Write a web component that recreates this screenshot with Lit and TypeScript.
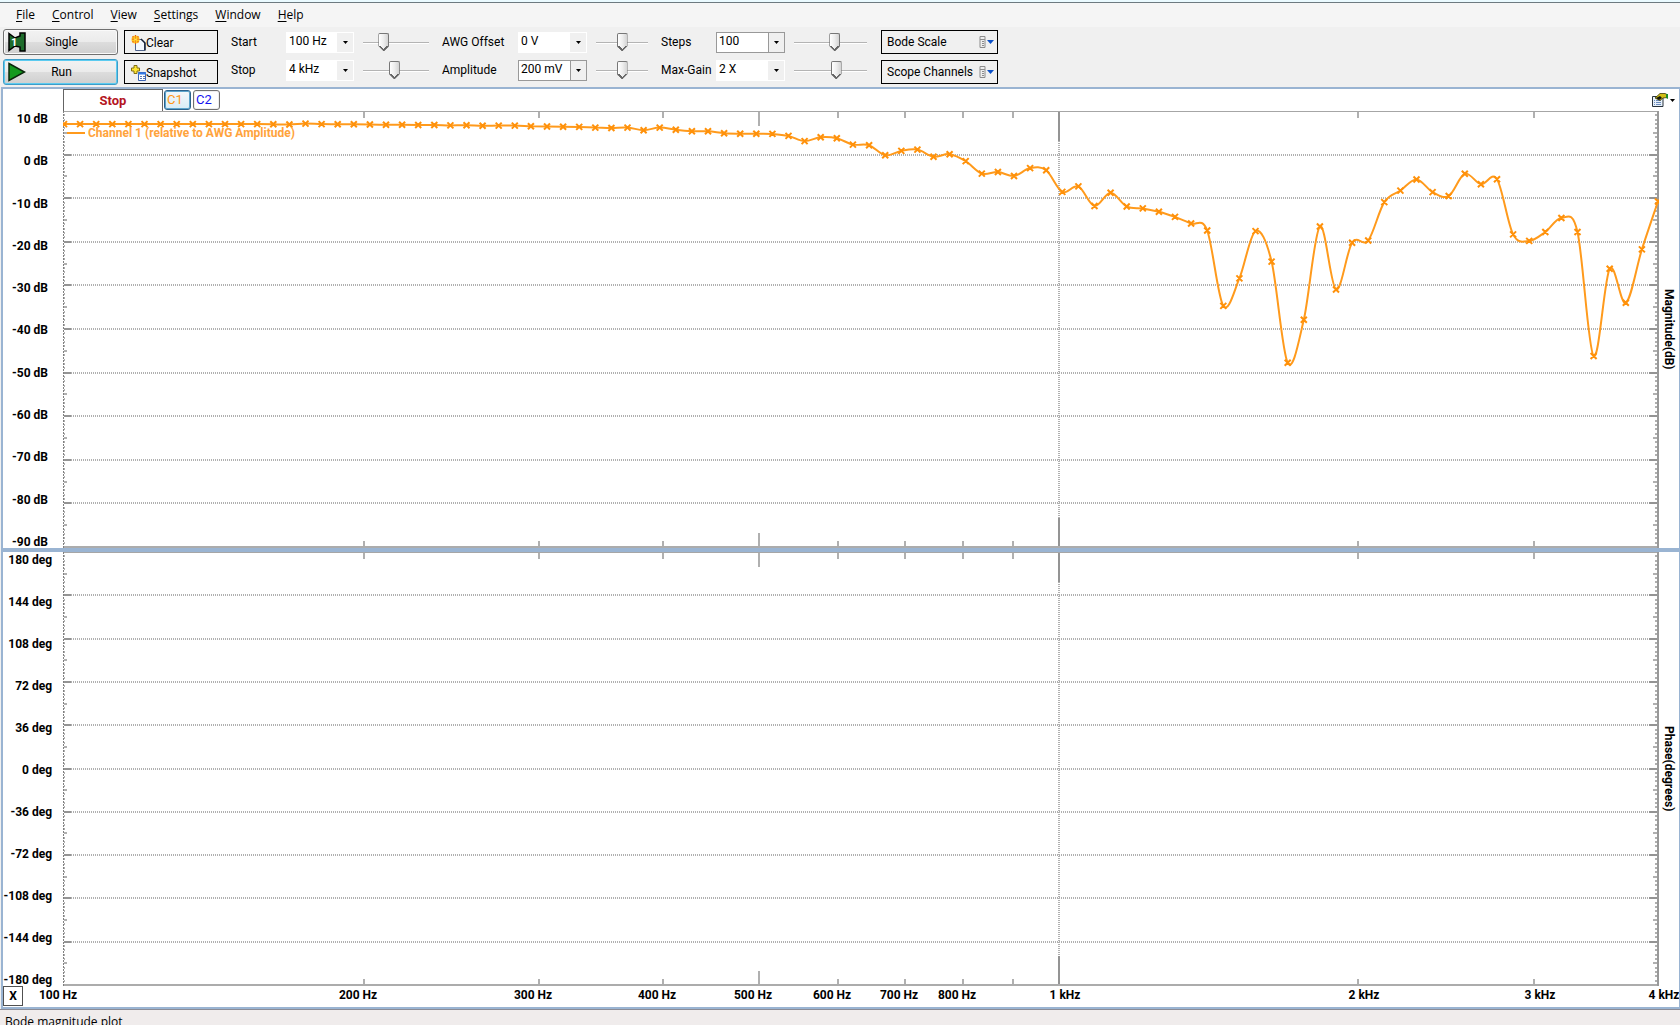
import { LitElement, html, svg, css, nothing } from "lit";
import { customElement, property, state } from "lit/decorators.js";
import { classMap } from "lit/directives/class-map.js";

const F_START = 100;
const F_STOP = 4000;

const CHANNEL_1 = [
  7, 7, 7, 7, 7, 7, 7, 7, 7, 7, 7, 7, 7, 6.95, 6.9, 7.1, 7, 6.95, 6.95, 6.9,
  6.85, 6.85, 6.8, 6.8, 6.7, 6.75, 6.6, 6.65, 6.65, 6.5, 6.45, 6.4, 6.35, 6.2,
  6.1, 6.2, 5.6, 6.2, 5.7, 5.35, 5.35, 4.9, 4.8, 4.8, 4.75, 4.3, 3.1, 4.0,
  3.75, 2.3, 2.15, -0.15, 0.85, 1.15, -0.5, 0.1, -1.5, -4.35, -4.0, -4.9,
  -3.1, -3.6, -8.55, -7.3, -11.8, -8.75, -11.9, -12.35, -13.1, -14.3, -15.8,
  -17.4, -34.7, -28.4, -17.55, -24.55, -47.75, -37.9, -16.5, -30.95, -20.2,
  -19.7, -10.9, -8.25, -5.7, -8.6, -9.5, -4.4, -6.8, -5.65, -18.3, -19.8,
  -17.75, -14.55, -17.75, -46.2, -26.2, -34.0, -21.75, -10.75,
];

/** Share of the axis width at which a frequency lies, on the log scale. */
const freqShare = (f: number) => Math.log(f / F_START) / Math.log(F_STOP / F_START);

/** Lit element that keeps track of its own content size. */
class SizedElement extends LitElement {
  @state() protected w = 0;
  @state() protected h = 0;
  private observer?: ResizeObserver;

  connectedCallback() {
    super.connectedCallback();
    this.observer = new ResizeObserver(() => this.measure());
    this.observer.observe(this);
  }
  disconnectedCallback() {
    this.observer?.disconnect();
    super.disconnectedCallback();
  }
  firstUpdated() {
    this.measure();
  }
  private measure() {
    this.w = this.clientWidth;
    this.h = this.clientHeight;
  }
}

@customElement("bode-plot")
class BodePlot extends SizedElement {
  @property({ attribute: false }) values: number[] = [];
  @property() legend = "";
  @property({ type: Number }) max = 10;
  @property({ type: Number }) min = -90;

  static styles = css`
    :host { display: block; min-width: 0; min-height: 0; overflow: hidden; }
    svg { display: block; }
    .grid { stroke: #b0b0b0; stroke-width: 2; stroke-dasharray: 1 1; fill: none; }
    .top { fill: #a6a6a6; }
    .base { stroke: #acacac; stroke-width: 2; fill: none; }
    .edge { stroke: #999; stroke-width: 2; fill: none; }
    .edge-dots { stroke: #808080; stroke-width: 1; stroke-dasharray: 2 1; fill: none; }
    .tick { stroke: #b0b0b0; stroke-width: 2; fill: none; }
    .major { stroke: #949494; stroke-width: 2; fill: none; }
    .trace { stroke: #ff9a1c; stroke-width: 2; fill: none; stroke-linejoin: round; }
    .marks { stroke: #ff910a; stroke-width: 2; fill: none; }
    .legend { fill: #ffa33c; font: bold 12px Roboto, "Liberation Sans", sans-serif; }
  `;

  private x = (share: number) => 1 + share * (this.w - 2);
  private y = (v: number) => ((this.max - v) / (this.max - this.min)) * (this.h - 1);

  private ticks() {
    const bottom = this.h;
    let d = "";
    for (let f = 200; f < F_STOP; f += f < 1000 ? 100 : 1000) {
      if (f === 1000) continue;
      const len = f === 500 ? 15 : 7;
      const x = Math.round(this.x(freqShare(f)));
      d += `M${x} 0V${len}M${x} ${bottom}V${bottom - len}`;
    }
    return d;
  }

  private sideTicks() {
    let minor = "";
    let major = "";
    let rows = "";
    for (let i = 0; i <= 100; i++) {
      const y = Math.round((i / 100) * (this.h - 1));
      const len = i % 5 === 0 ? 4 : 2;
      if (i % 10 === 0) {
        major += `M1 ${y}h7M${this.w - 1} ${y}h-9`;
        if (i > 0 && i < 100) rows += `M8 ${y}H${this.w - 9}`;
      } else {
        minor += `M1 ${y}h${len - 1}M${this.w - 1} ${y}h${-len - 1}`;
      }
    }
    return { minor, major, rows };
  }

  private trace() {
    const n = this.values.length - 1;
    const pts = this.values.map((v, i) => [this.x(i / n), this.y(v)]);
    const r = (v: number) => v.toFixed(1);
    let line = `M${r(pts[0][0])} ${r(pts[0][1])}`;
    let marks = "";
    for (let i = 0; i < n; i++) {
      const a = pts[Math.max(i - 1, 0)];
      const b = pts[i];
      const c = pts[i + 1];
      const e = pts[Math.min(i + 2, n)];
      line += `C${r(b[0] + (c[0] - a[0]) / 6)} ${r(b[1] + (c[1] - a[1]) / 6)} ${r(c[0] - (e[0] - b[0]) / 6)} ${r(c[1] - (e[1] - b[1]) / 6)} ${r(c[0])} ${r(c[1])}`;
    }
    for (const [x, y] of pts) marks += `M${r(x - 3)} ${r(y - 3)}l6 6m0 -6l-6 6`;
    return svg`<path class="trace" d=${line}></path><path class="marks" d=${marks}></path>`;
  }

  render() {
    const { w, h } = this;
    if (!w || !h) return nothing;
    const side = this.sideTicks();
    const k = Math.round(this.x(freqShare(1000)));
    return html`<svg width=${w} height=${h}>
      <path class="grid" d=${side.rows}></path>
      <path class="grid" d=${`M${k} 0V${h}`}></path>
      <path class="tick" d=${side.minor + this.ticks()}></path>
      <path class="major" d=${side.major + `M${k} 0v30M${k} ${h}v-30`}></path>
      <rect class="top" width=${w} height="1"></rect>
      <path class="base" d=${`M0 ${h - 1}H${w}`}></path>
      <path class="edge-dots" d=${`M.5 0V${h}`}></path>
      <path class="edge" d=${`M${w - 1} 0V${h}`}></path>
      ${this.values.length ? this.trace() : nothing}
      ${this.legend
        ? svg`<path class="trace" d="M4 22h18"></path><text class="legend" x="25" y="26">${this.legend}</text>`
        : nothing}
    </svg>`;
  }
}

@customElement("frequency-axis")
class FrequencyAxis extends SizedElement {
  /** Distance from the element's edges to the ends of the plotted range. */
  @property({ type: Number }) left = 0;
  @property({ type: Number }) right = 0;

  static styles = css`
    :host { display: block; min-width: 0; overflow: hidden; }
    svg { display: block; }
    text { font: bold 12px Roboto, "Liberation Sans", sans-serif; text-anchor: middle; }
  `;

  render() {
    if (!this.w) return nothing;
    const list = [100, 200, 300, 400, 500, 600, 700, 800, 1000, 2000, 3000, 4000];
    const span = this.w - this.left - this.right;
    return html`<svg width=${this.w} height=${this.h}>
      ${list.map((f) => {
        const shift = f < 1000 ? -6 : 6;
        const label = f < 1000 ? `${f} Hz` : `${f / 1000} kHz`;
        return svg`<text x=${Math.round(this.left + span * freqShare(f)) + shift} y="13">${label}</text>`;
      })}
    </svg>`;
  }
}

@customElement("value-combo")
class ValueCombo extends LitElement {
  @property() label = "";
  @property() value = "";
  @property({ type: Boolean }) framed = false;
  @property({ type: Number }) level = 50;

  static styles = css`
    :host { display: contents; }
    label { font-size: 12px; line-height: 22px; white-space: nowrap; }
    .combo { display: grid; grid-template-columns: 1fr 16px; height: 21px; box-sizing: border-box; border: 1px solid #fff; background: #fff; }
    .framed { border-color: #999; }
    select { grid-area: 1 / 1 / 2 / 3; appearance: none; border: 0; margin: 0; padding: 0 0 2px 2px; background: none; font: inherit; font-size: 12px; color: #000; min-width: 0; border-radius: 0; }
    .arrow { grid-area: 1 / 2; background: #f0f0f0; display: grid; place-items: center; pointer-events: none; }
    .framed .arrow { border-left: 1px solid #999; }
    input { appearance: none; margin: 0 0 0 9px; width: calc(100% - 9px); height: 21px; background: linear-gradient(#b4b4b4, #b4b4b4) 0 10px / 100% 1px no-repeat, linear-gradient(#fff, #fff) 0 11px / 100% 1px no-repeat; }
    input::-webkit-slider-thumb {
      appearance: none; box-sizing: border-box; width: 11px; height: 18px; border: 1px solid #777; border-bottom: 0; border-radius: 2px 2px 0 0;
      background:
        linear-gradient(to top right, transparent 38%, #666 38% 64%, transparent 64%) 0 100% / 5px 5px no-repeat,
        linear-gradient(to top left, transparent 38%, #666 38% 64%, transparent 64%) 100% 100% / 5px 5px no-repeat,
        linear-gradient(90deg, #fff, #eee 50%, #d4d4d4);
      clip-path: polygon(0 0, 100% 0, 100% 13px, 6px 100%, 5px 100%, 0 13px);
    }
  `;

  render() {
    return html`<label for="value">${this.label}</label>
      <span class=${classMap({ combo: true, framed: this.framed })}>
        <select id="value"><option>${this.value}</option></select>
        <span class="arrow"><svg width="5" height="3"><path d="M0 0h5L2.5 3z"></path></svg></span>
      </span>
      <input type="range" aria-label=${this.label} min="0" max="100" .value=${String(this.level)} />`;
  }
}

@customElement("app-root")
class AppRoot extends LitElement {
  static styles = css`
    :host { display: grid; grid-template-rows: auto auto auto minmax(0, 1fr) 16px; height: 100vh; overflow: hidden; background: #f0f0f0; color: #000; font: 12px/16px Roboto, "Liberation Sans", sans-serif; }
    button { font: inherit; color: inherit; margin: 0; padding: 0; box-sizing: border-box; }
    svg { display: block; flex: none; }

    .titlebar { height: 2px; background: #eafaff; border-bottom: 1px solid #6d7a80; }
    .menu { display: flex; height: 24px; background: #f5f5f5; padding-left: 7px; align-items: center; font-family: "Open Sans", "Noto Sans", sans-serif; }
    .menu a { color: inherit; text-decoration: none; padding: 0 8px 0 9px; }
    .menu u { text-underline-offset: 2px; }

    .toolbar { display: flex; height: 60px; align-items: center; padding-left: 3px; }
    .stack { display: grid; gap: 4px; width: 115px; }
    .stack.tools { gap: 6px; width: 94px; margin-left: 6px; }
    .stack.menus { gap: 6px; width: 117px; margin-left: 14px; }
    .run { display: grid; grid-template-columns: 24px 1fr; align-items: center; height: 26px; padding: 0 26px 0 4px; border: 1px solid #707070; border-radius: 3px; background: linear-gradient(#f2f2f2, #ebebeb 50%, #dddddd 50%, #cfcfcf); box-shadow: inset 0 0 0 1px #fafafa; }
    .run.active { border-color: #3c9cc8; box-shadow: inset 0 0 0 1px #5ccbf0; }
    .boxed { display: flex; align-items: center; height: 24px; border: 1px solid #000; background: #f0f0f0; padding: 2px 0 0 6px; text-align: left; }
    .menus .boxed { justify-content: space-between; padding: 0 3px 0 5px; }
    .fields { display: grid; align-items: center; row-gap: 6px; padding-bottom: 2px; }
    .f1 { grid-template-columns: 55px 68px 75px; margin-left: 13px; }
    .f2 { grid-template-columns: 76px 69px 61px; margin-left: 13px; }
    .f3 { grid-template-columns: 55px 69px 82px; margin-left: 13px; }

    .chart { display: grid; grid-template-rows: 22px minmax(0, 437fr) 4px minmax(0, 434fr) 21px; border: 2px solid #9ab4d2; border-right-width: 1px; margin-left: 1px; background: #fff; min-height: 0; }
    .bar { display: flex; padding: 0 4px 0 60px; }
    .stop { width: 100px; box-sizing: border-box; border: 1px solid #646464; border-bottom: 0; color: #b4141e; font-size: 13px; font-weight: bold; text-align: center; line-height: 22px; }
    .chan { width: 27px; height: 20px; margin: 1px 0 0 1px; border: 1px solid #707070; border-radius: 3px; background: #fff; font-size: 13px; color: #1414f0; padding-right: 5px; box-shadow: inset 0 0 0 1px #eee; }
    .chan + .chan { margin-left: 2px; }
    .chan.on { color: #ff9614; border-color: #2c628b; background: linear-gradient(#f4f8fa, #d8ecf6); box-shadow: inset 0 0 0 1px #5ca4cc; }
    .options { display: flex; align-items: center; gap: 2px; margin-left: auto; border: 0; background: none; }
    .panel { display: grid; grid-template-columns: 60px minmax(0, 1fr) 20px; min-height: 0; }
    .splitter { background: #9ab4d2; }
    .scale { display: flex; flex-direction: column; justify-content: space-between; align-items: flex-end; padding: 1px 15px 0 0; margin-bottom: -1px; line-height: 14px; font-weight: bold; white-space: nowrap; min-height: 0; }
    .scale.phase { padding-right: 11px; }
    .title { writing-mode: vertical-rl; text-align: center; font-weight: bold; line-height: 20px; }
    .axis { display: grid; grid-template-columns: 20px minmax(0, 1fr); }
    .close { height: 20px; background: #fff; border: 1px solid #505050; font-weight: bold; }
    .status { background: #f0ecec; border-top: 1px solid #8c8c96; padding: 4px 0 0 5px; overflow: hidden; font-family: "Open Sans", "Noto Sans", sans-serif; }
  `;

  private menuArrow() {
    return html`<svg width="15" height="12" viewBox="0 0 15 12">
      <path d="M1 .5h5v11H1z" fill="#eee" stroke="#8c8c8c"></path>
      <path d="M1 3.5h5M3 5.5h2M3 7.5h2M3 9.5h2" stroke="#8c8c8c"></path>
      <path d="M8 4h7l-3.500 4z" fill="#0a50c8"></path>
    </svg>`;
  }

  private scale(from: number, step: number, unit: string) {
    return Array.from({ length: 11 }, (_, i) => html`<span>${from - i * step} ${unit}</span>`);
  }

  render() {
    const menu = ["File", "Control", "View", "Settings", "Window", "Help"];
    return html`
      <div class="titlebar"></div>
      <nav class="menu">
        ${menu.map((m) => html`<a href="#"><u>${m[0]}</u>${m.slice(1)}</a>`)}
      </nav>
      <div class="toolbar">
        <div class="stack">
          <button class="run">
            <svg width="18" height="20" viewBox="0 0 18 20">
              <path d="M1 1.500l6 4.500 5-2V1h5v18h-5v-4l-5-1-6 4.500z" fill="#1d6b2a" stroke="#000" stroke-width="1.500"></path>
              <text x="3" y="14" font-size="11" font-weight="bold" fill="#fff">1</text>
            </svg>
            <span>Single</span>
          </button>
          <button class="run active">
            <svg width="18" height="20" viewBox="0 0 18 20">
              <path d="M1 1.500L16.500 10 1 18.500z" fill="#149a1e" stroke="#0a280c" stroke-width="1.500"></path>
            </svg>
            <span>Run</span>
          </button>
        </div>
        <div class="stack tools">
          <button class="boxed">
            <svg width="15" height="16" viewBox="0 0 15 16">
              <path d="M4.500 4.500h6l3 3v8h-9z" fill="#f4f8ff" stroke="#50648c"></path>
              <path d="M10 4l4 4v7.500" fill="none" stroke="#141e32" stroke-width="1.500"></path>
              <circle cx="4.500" cy="4.500" r="4" fill="#ffc81e"></circle>
              <path d="M2 1v7M4.500 0v9M7 1v7" stroke="#e6501e" stroke-dasharray="1.500 1"></path>
              <path d="M3.500 4.500h2" stroke="#ffe650" stroke-width="2"></path>
            </svg>
            Clear
          </button>
          <button class="boxed">
            <svg width="15" height="16" viewBox="0 0 15 16">
              <path d="M3 .5h3V3h2.500v3H6v2.500H3V6H.5V3H3z" fill="#ffe632" stroke="#826e14"></path>
              <path d="M7.500 7.500h7v8h-7z" fill="#fff" stroke="#3c64b4"></path>
              <path d="M7 8.500h8" stroke="#3278e6" stroke-width="2"></path>
              <path d="M9 11.500h2m1 0h2M9 13.500h2m1 0h2" stroke="#5a78b4"></path>
            </svg>
            Snapshot
          </button>
        </div>
        <div class="fields f1">
          <value-combo label="Start" value="100 Hz" level="28"></value-combo>
          <value-combo label="Stop" value="4 kHz" level="47"></value-combo>
        </div>
        <div class="fields f2">
          <value-combo label="AWG Offset" value="0 V" level="50"></value-combo>
          <value-combo label="Amplitude" value="200 mV" level="50" framed></value-combo>
        </div>
        <div class="fields f3">
          <value-combo label="Steps" value="100" level="57" framed></value-combo>
          <value-combo label="Max-Gain" value="2 X" level="59"></value-combo>
        </div>
        <div class="stack menus">
          <button class="boxed">Bode Scale ${this.menuArrow()}</button>
          <button class="boxed">Scope Channels ${this.menuArrow()}</button>
        </div>
      </div>
      <main class="chart">
        <div class="bar">
          <span class="stop">Stop</span>
          <button class="chan on">C1</button>
          <button class="chan">C2</button>
          <button class="options" aria-label="Plot options">
            <svg width="16" height="14" viewBox="0 0 16 14">
              <path d="M.5 3.500h10.500v10H.5z" fill="#e6f0fa" stroke="#28323c"></path>
              <path d="M2 7.500h1m1 0h5M2 9.500h1m1 0h5M2 11.500h1m1 0h5" stroke="#6e8cbe"></path>
              <path d="M3 5l5-4.500h5l2 1v3l-4 .5-3 2.500z" fill="#d2be14" stroke="#3c3c0a" stroke-width=".8"></path>
              <path d="M4 5l3 2 3-2-2-2z" fill="#141408"></path>
              <path d="M14 1h2v5l-2-1z" fill="#1e8c28"></path>
            </svg>
            <svg width="5" height="3"><path d="M0 0h5L2.500 3z"></path></svg>
          </button>
        </div>
        <section class="panel">
          <div class="scale">${this.scale(10, 10, "dB")}</div>
          <bode-plot legend="Channel 1 (relative to AWG Amplitude)" .values=${CHANNEL_1}></bode-plot>
          <div class="title">Magnitude(dB)</div>
        </section>
        <div class="splitter"></div>
        <section class="panel">
          <div class="scale phase">${this.scale(180, 36, "deg")}</div>
          <bode-plot max="180" min="-180"></bode-plot>
          <div class="title">Phase(degrees)</div>
        </section>
        <div class="axis">
          <button class="close">X</button>
          <frequency-axis left="41" right="21"></frequency-axis>
        </div>
      </main>
      <div class="status">Bode magnitude plot</div>
    `;
  }
}
